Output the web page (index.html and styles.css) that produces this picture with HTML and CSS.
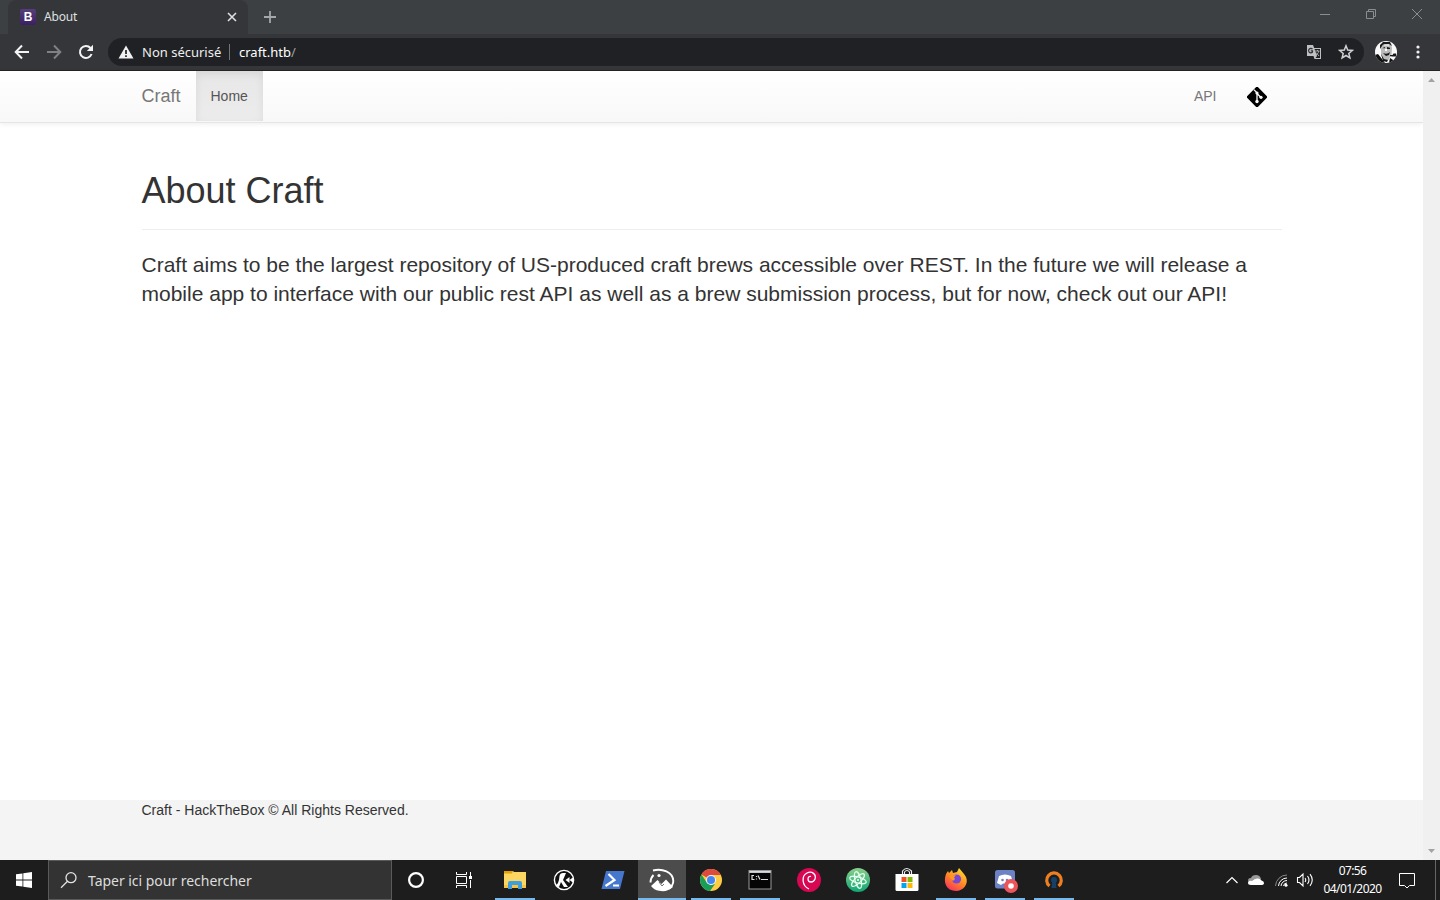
FILE: index.html
```html
<!DOCTYPE html>
<html lang="fr">
<head>
<meta charset="utf-8">
<title>About</title>
<link rel="stylesheet" href="styles.css">
</head>
<body>
<div class="desktop">
  <header class="tabstrip">
    <div class="tab">
      <span class="favicon">B</span>
      <span class="tab-title">About</span>
      <svg class="tab-close" width="10" height="10" viewBox="0 0 10 10"><path d="M1 1l8 8M9 1l-8 8" stroke="#dfe0e1" stroke-width="1.6"/></svg>
    </div>
    <svg class="new-tab" width="14" height="14" viewBox="0 0 14 14"><path d="M7 1v12M1 7h12" stroke="#a5a7a9" stroke-width="1.8"/></svg>
    <div class="window-buttons">
      <svg width="12" height="12" viewBox="0 0 12 12"><path d="M1 6.500h10" stroke="#8b8e90"/></svg>
      <svg width="12" height="12" viewBox="0 0 12 12"><path d="M1.500 3.500h7v7h-7zM3.500 3V1.500h7v7H9" fill="none" stroke="#8b8e90"/></svg>
      <svg width="12" height="12" viewBox="0 0 12 12"><path d="M1 1l10 10M11 1L1 11" stroke="#8b8e90"/></svg>
    </div>
  </header>
  <div class="toolbar">
    <svg class="tool" width="16" height="16" viewBox="0 0 16 16"><path d="M15 8H2M8 1.500L1.700 8 8 14.500" fill="none" stroke="#f4f4f4" stroke-width="2"/></svg>
    <svg class="tool" width="16" height="16" viewBox="0 0 16 16"><path d="M1 8h13M8 1.500L14.300 8 8 14.500" fill="none" stroke="#7f8184" stroke-width="2"/></svg>
    <svg class="tool" width="16" height="16" viewBox="0 0 16 16"><path d="M13.600 10A6 6 0 1 1 12.500 4" fill="none" stroke="#f4f4f4" stroke-width="2"/><path d="M15 .8V7H8.800z" fill="#f4f4f4"/></svg>
    <div class="address">
      <svg width="16" height="14" viewBox="0 0 16 14"><path d="M8 .5L15.500 13.500H.5z" fill="#f1f1f1"/><path d="M8 5v4M8 10.300v1.800" stroke="#202124" stroke-width="1.700"/></svg>
      <span class="security">Non sécurisé</span>
      <span class="divider"></span>
      <span class="url">craft.htb<span class="slash">/</span></span>
      <svg class="translate" width="16" height="16" viewBox="0 0 16 16"><path d="M1 1h6l1.200 3H15v11H8.500l-1-3H1z" fill="#bfc0c1"/><path d="M8.500 5H14v9H9.500l1.500-2z" fill="#202124"/><path d="M9 7h4.500M11.500 6v1M12.800 7c-.3 2-1.500 3-3 4M10 8.500l3 3.500" fill="none" stroke="#bfc0c1" stroke-width=".8"/><path d="M6.500 5.200A2.200 2.200 0 1 0 6.500 8V6.800H4.800" fill="none" stroke="#303134" stroke-width="1.200"/></svg>
      <svg class="star" width="16" height="16" viewBox="0 0 16 16"><path d="M8 1.800l1.700 4.300 4.600.3-3.500 3 1.100 4.500L8 11.500l-3.900 2.400 1.100-4.500-3.500-3 4.600-.3z" fill="none" stroke="#cfd0d1" stroke-width="1.500"/></svg>
    </div>
    <svg class="avatar" width="22" height="22" viewBox="0 0 22 22"><defs><clipPath id="face"><circle cx="11" cy="11" r="11"/></clipPath></defs><g clip-path="url(#face)"><path d="M0 0h22v22H0z" fill="#fafafa"/><path d="M0 14l3-1 4 5 3 4H0zM14 22l1-5 3 2 1 3z" fill="#111"/><path d="M6 7l1-4 5-2 4 2 1 4-.5 7-3 5H10L6 14z" fill="#bbb"/><path d="M5 8l0-4 3-3h7l2 4-3-2-6 .5zM7.500 7l2.500-1v1.300H7.500zM12 6l3 .7v1.300h-3zM8 12q4 2 7-1l-1 3-3 1zM6 13l3 5 4 1-1 2-4-1zM15 14h2.500l1-1.500h2.500v3h-4l-2-.5z" fill="#181818"/><path d="M9 3.500h5v1H9zM10 8h2v2h-2z" fill="#fff"/></g></svg>
    <svg class="kebab" width="4" height="14" viewBox="0 0 4 14"><g fill="#f1f1f1"><circle cx="2" cy="2" r="1.600"/><circle cx="2" cy="7" r="1.600"/><circle cx="2" cy="12" r="1.600"/></g></svg>
  </div>
  <div class="viewport">
    <div class="page">
      <nav class="navbar">
        <div class="container nav-inner">
          <a class="brand">Craft</a>
          <a class="nav-link active">Home</a>
          <a class="nav-link api">API</a>
          <svg class="git" width="20" height="20" viewBox="0 0 20 20"><rect x="2.400" y="2.400" width="15.200" height="15.200" rx="1.200" transform="rotate(45 10 10)" fill="#000"/><path d="M6.800 2.600l3.200 3.200V14.500M10 6.500l3.700 3.700" fill="none" stroke="#fafafa" stroke-width="1.300"/><g fill="#fafafa"><circle cx="10" cy="6" r="1.600"/><circle cx="10" cy="14.500" r="1.700"/><circle cx="14" cy="10.300" r="1.600"/></g></svg>
        </div>
      </nav>
      <main class="container content">
        <h1 class="heading">About Craft</h1>
        <p class="lead">Craft aims to be the largest repository of US-produced craft brews accessible over REST. In the future we will release a<br>mobile app to interface with our public rest API as well as a brew submission process, but for now, check out our API!</p>
      </main>
      <footer class="footer"><div class="container">Craft - HackTheBox © All Rights Reserved.</div></footer>
    </div>
    <div class="scrollbar">
      <svg width="7" height="4" viewBox="0 0 7 4"><path d="M0 4L3.500 0 7 4z" fill="#a3a3a3"/></svg>
      <svg width="7" height="4" viewBox="0 0 7 4"><path d="M0 0h7L3.500 4z" fill="#a3a3a3"/></svg>
    </div>
  </div>
  <div class="taskbar">
    <div class="start"><svg width="16" height="16" viewBox="0 0 16 16"><path d="M0 2.300l6.500-.9v6.200H0zM7.300 1.200L16 0v7.600H7.300zM0 8.400h6.500v6.200L0 13.700zM7.300 8.400H16V16l-8.700-1.200z" fill="#fff"/></svg></div>
    <div class="search">
      <svg width="18" height="18" viewBox="0 0 18 18"><circle cx="11" cy="6.700" r="5" fill="none" stroke="#e4e4e4" stroke-width="1.300"/><path d="M7.500 10.300L1 16.800" stroke="#e4e4e4" stroke-width="1.300"/></svg>
      <span class="search-text">Taper ici pour rechercher</span>
    </div>
    <div class="apps">
      <div class="app"><svg viewBox="0 0 24 24"><circle cx="11" cy="12" r="6.900" fill="none" stroke="#fff" stroke-width="2.200"/></svg></div>
      <div class="app"><svg viewBox="0 0 24 24"><path d="M2.500 4v2.500h10V4M2.500 20v-2.500h10V20M2.500 8.500h10v7h-10zM16.500 4v4M16.500 12v8" fill="none" stroke="#fff" stroke-width="1"/><path d="M15 8h3v3h-3z" fill="#fff"/></svg></div>
      <div class="app open"><svg viewBox="0 0 24 24"><path d="M1 3h9l1 1h12v16H1z" fill="#fcd663"/><path d="M1 3h9l-1 2.500H1z" fill="#e6a000"/><path d="M1 17h22v3H1z" fill="#f6c343"/><path d="M5 21v-6q0-2 2-2h10q2 0 2 2v6h-4v-4H9v4z" fill="#3d9fe0"/></svg></div>
      <div class="app"><svg viewBox="0 0 24 24"><circle cx="12" cy="12" r="9.600" fill="#111" stroke="#fff" stroke-width="1.400"/><path d="M3 18Q7 16 7.500 8Q8 5 11 5L14 5l-3 7 5 7h-4l-3-5-2 5zM17.500 9v6l-4-3zM21.500 9v6l-4-3z" fill="#fff"/></svg></div>
      <div class="app"><svg viewBox="0 0 24 24"><path d="M5 3h18.500L19 21H.5z" fill="#4577cf"/><path d="M7.500 6l6 6-9 6M12 17.500h6" fill="none" stroke="#fff" stroke-width="2.200"/></svg></div>
      <div class="app open current"><svg viewBox="0 0 24 24"><path d="M3 2.500C12 0 23 4 23.300 13c0 3-2 6-5 8M3.500 7Q.5 10 .5 14.500" fill="none" stroke="#fff" stroke-width="1.900"/><path d="M1 18l6.500-6 4 4 4.500-4.500 7 7.500q-6 5.500-14 3.700Q4 22 1 18z" fill="#fff"/><path d="M9 14l3 4 2-2" fill="none" stroke="#4c4c4c" stroke-width=".8"/><circle cx="9" cy="7.500" r="1.600" fill="#fff"/></svg></div>
      <div class="app open"><svg viewBox="0 0 24 24"><circle cx="12" cy="12" r="11" fill="#ffcd42"/><path d="M12 12L2.500 6.500A11 11 0 0 1 21.700 7H12z" fill="#dd4b3e"/><path d="M2.500 6.500L7.700 14.500 12 17l4-1-5 7A11 11 0 0 1 2.500 6.500" fill="#199e5a"/><circle cx="12" cy="12" r="5" fill="#f4f4f4"/><circle cx="12" cy="12" r="4" fill="#4387ef"/></svg></div>
      <div class="app open"><svg viewBox="0 0 24 24"><path d="M.5 2h23v19.500H.5z" fill="#999"/><path d="M1.500 5h21v15.500h-21z" fill="#050505"/><path d="M1.500 3h21v1.700h-21z" fill="#d6dce4"/><path d="M6 7.500H4v4h2.500M8.500 8v1M8.500 10.500v1M10 7.500l2 4M13 11.500h7" fill="none" stroke="#ddd" stroke-width="1.200"/></svg></div>
      <div class="app"><svg viewBox="0 0 24 24"><circle cx="12" cy="12" r="12" fill="#d70751"/><path d="M12 21C5 18 4 8 10 5c5-2.500 9.500 1.500 8 6-1.500 4-7 4-7 0 0-2 1.500-3 3-2.500" fill="none" stroke="#fff" stroke-width="1.300"/></svg></div>
      <div class="app"><svg viewBox="0 0 24 24"><defs><linearGradient id="leaf" x1="0" y1="0" x2="0" y2="1"><stop stop-color="#8bcf8a"/><stop offset="1" stop-color="#10a675"/></linearGradient></defs><circle cx="12" cy="12" r="12" fill="url(#leaf)"/><g fill="none" stroke="#e5fff0" stroke-width="1.200" transform="rotate(15 12 12)"><ellipse cx="12" cy="12" rx="8.500" ry="3"/><ellipse cx="12" cy="12" rx="8.500" ry="3" transform="rotate(60 12 12)"/><ellipse cx="12" cy="12" rx="8.500" ry="3" transform="rotate(120 12 12)"/></g><circle cx="12" cy="12" r="1" fill="#fff"/></svg></div>
      <div class="app"><svg viewBox="0 0 24 24"><path d="M7.500 6V3q4-5 9 0v3M9.500 6V4q2.500-3 5 0v2" fill="none" stroke="#eee" stroke-width="1.100"/><path d="M.5 6h23v15.500q0 1.500-1.500 1.500H2Q.5 23 .5 21.500z" fill="#fff"/><path d="M6.500 9h5v5h-5z" fill="#f25022"/><path d="M12.500 9h5v5h-5z" fill="#7fba00"/><path d="M6.500 15h5v5h-5z" fill="#00a4ef"/><path d="M12.500 15h5v5h-5z" fill="#ffb900"/></svg></div>
      <div class="app open"><svg viewBox="0 0 24 24"><defs><linearGradient id="fire" x1=".8" y1="0" x2=".2" y2="1"><stop stop-color="#ffe52e"/><stop offset=".5" stop-color="#ff8a22"/><stop offset="1" stop-color="#f52c64"/></linearGradient></defs><path d="M2 6l2-3 1 2 3-3 1 3 4-1 2-4 5 6 2 3c3 7-3 14-10 14C2 23-1 14 2 6z" fill="url(#fire)"/><circle cx="12.500" cy="11" r="4.600" fill="#7947d6"/><path d="M5 8l7-1-2 2.500 1 1.500-2 2z" fill="#ff9727"/></svg></div>
      <div class="app open"><svg viewBox="0 0 24 24"><rect x="2" y="2" width="20" height="18.500" rx="2.500" fill="#6c82c5"/><path d="M6 8q6-3 12 0l2 7-4 2-2-1.500h-4L8 17l-4-2z" fill="#fff"/><circle cx="9.500" cy="12" r="1.300" fill="#6c82c5"/><circle cx="14" cy="12" r="1.300" fill="#6c82c5"/><circle cx="18" cy="18" r="7" fill="#ec5559"/><circle cx="18" cy="18" r="2.800" fill="#fff"/></svg></div>
      <div class="app open"><svg viewBox="0 0 24 24"><path d="M7.500 18A7.300 7.300 0 1 1 16.500 18" fill="none" stroke="#ed7f22" stroke-width="3.200"/><circle cx="12" cy="12" r="3" fill="#174067"/><path d="M10.500 12h3l1 8h-5z" fill="#174067"/></svg></div>
    </div>
    <div class="tray">
      <svg width="14" height="8" viewBox="0 0 14 8"><path d="M1.500 7L7 1.500 12.500 7" fill="none" stroke="#fff" stroke-width="1.200"/></svg>
      <svg width="18" height="12" viewBox="0 0 18 12"><path d="M1.500 8Q0 4 4 4Q5 1 9 1Q13 1 14 5z" fill="#999"/><path d="M4 11Q.8 11 1 8.500 1.500 6 5 7q3-3 6-2.500Q14 5 14.500 6.500 17 7 17 9q0 2-3 2z" fill="#fff"/></svg>
      <svg width="14" height="14" viewBox="0 0 14 14"><g fill="none" stroke="#888"><path d="M1.500 13A11.500 11.500 0 0 1 13 2"/><path d="M4.500 13A8.500 8.500 0 0 1 13 5M7 13a6 6 0 0 1 6-5.500M9.500 13A3.500 3.500 0 0 1 13 10" stroke="#fff"/></g><circle cx="12" cy="12.300" r="1.500" fill="#fff"/></svg>
      <svg width="18" height="16" viewBox="0 0 18 16"><path d="M1.500 5.500h2L7 2v12L3.500 10.500h-2zM9 6q1.500 2 0 4M11.500 4q3 4 0 8M14 2.200q4.500 5.800 0 11.600" fill="none" stroke="#fff" stroke-width="1.100"/></svg>
    </div>
    <div class="clock"><span class="time">07:56</span><span class="date">04/01/2020</span></div>
    <svg class="notify" width="18" height="17" viewBox="0 0 18 17"><path d="M1.500 1.500h15v12h-5L9 16l-2.500-2.500h-5z" fill="none" stroke="#fff"/></svg>
    <div class="peek"></div>
  </div>
</div>
</body>
</html>
```
FILE: styles.css
```css
* { box-sizing: border-box; }
body { margin: 0; overflow: hidden; font-family: "Liberation Sans", Arial, sans-serif; }
svg { display: block; flex: none; }
.desktop { width: 1440px; height: 900px; display: flex; flex-direction: column; }
.tabstrip { height: 34px; background: #3c4043; display: flex; align-items: flex-start; font-family: "Noto Sans", sans-serif; }
.tab { width: 240px; height: 34px; margin-left: 8px; padding: 0 11px 0 12px; background: #35363a; border-radius: 8px 8px 0 0; display: flex; align-items: center; }
.favicon { width: 16px; height: 16px; border-radius: 2px; background: linear-gradient(#563d7c, #3a2063); color: #fff; font: bold 12px/16px "Liberation Sans", sans-serif; text-align: center; }
.tab-title { margin-left: 8px; color: #dfe0e1; font-size: 12px; letter-spacing: -.2px; line-height: 16px; }
.tab-close { margin-left: auto; }
.new-tab { margin: 10px 0 0 15px; }
.window-buttons { margin: 8px 17px 0 auto; display: flex; gap: 34px; }
.toolbar { height: 37px; background: #35363a; border-bottom: 1px solid #272225; display: flex; align-items: center; padding-left: 14px; font-family: "Noto Sans", sans-serif; }
.tool { margin-right: 16px; }
.address { width: 1256px; height: 28px; margin-left: -2px; padding: 0 10px; border-radius: 14px; background: #202124; display: flex; align-items: center; }
.security { margin-left: 8px; width: 80px; color: #eee; font-size: 13px; letter-spacing: 0; white-space: nowrap; }
.divider { width: 1px; height: 16px; margin: 0 9px 0 7px; background: #727477; }
.url { color: #fff; font-size: 13px; letter-spacing: 0; }
.slash { color: #9aa0a6; }
.translate { margin-left: auto; }
.star { margin-left: 16px; }
.avatar { margin-left: 11px; }
.kebab { margin-left: 19px; }
.viewport { height: 789px; display: flex; background: #fff; }
.page { width: 1423px; display: flex; flex-direction: column; }
.container { width: 1140px; margin: 0 auto; }
.navbar { height: 52px; border-bottom: 1px solid #e5e5e5; background: linear-gradient(#fff, #f8f8f8); box-shadow: 0 1px 5px rgba(0,0,0,.075); }
.nav-inner { display: flex; align-items: flex-start; }
.brand { width: 54px; color: #777; font-size: 18px; line-height: 50px; }
.nav-link { height: 50px; padding: 0 15px; color: #777; font-size: 14px; line-height: 51px; }
.active { color: #555; background: linear-gradient(#e7e7e7, #ececec); box-shadow: inset 0 3px 9px rgba(0,0,0,.075); }
.api { margin-left: auto; }
.git { margin: 16px 15px 0 15px; }
.content { flex: 1; padding-top: 47px; color: #333; }
.heading { height: 60px; margin: 0; border-bottom: 1px solid #eee; font-size: 36px; font-weight: 500; line-height: 42px; }
.lead { margin: 20px 0 0; font-size: 21px; line-height: 29.400px; white-space: nowrap; }
.footer { height: 60px; background: #f4f4f4; color: #333; font-size: 14px; line-height: 20px; }
.scrollbar { width: 17px; padding: 7px 5px 7px; display: flex; flex-direction: column; justify-content: space-between; background: #f0f0f0; }
.taskbar { height: 40px; display: flex; background: #1d1d1d; font-family: "Noto Sans", sans-serif; }
.start { width: 48px; display: grid; place-items: center; }
.search { width: 344px; border: 1px solid #5a5a5a; background: #333; display: flex; align-items: center; padding-left: 11px; }
.search-text { margin-left: 10px; color: #ddd; font-size: 14px; letter-spacing: -.03px; white-space: nowrap; }
.apps { margin-left: 1px; display: flex; gap: 1px; }
.app { width: 48px; height: 40px; padding: 8px 4px 0; display: flex; flex-direction: column; align-items: center; justify-content: space-between; }
.app svg { width: 24px; height: 24px; overflow: visible; }
.open::after { content: ""; width: 40px; height: 2px; background: #76b9ed; }
.current { padding-left: 0; padding-right: 0; background: #4c4c4c; }
.current::after { width: 48px; }
.tray { margin-left: auto; display: flex; align-items: center; gap: 8.500px; }
.clock { width: 59px; margin-left: 9px; margin-right: 1px; padding-top: 2px; color: #fff; font-size: 12px; line-height: 18px; letter-spacing: -.6px; display: flex; flex-direction: column; align-items: center; white-space: nowrap; }
.notify { margin: 12px 19px 0 15px; }
.peek { width: 5px; border-left: 1px solid #666; }
```
